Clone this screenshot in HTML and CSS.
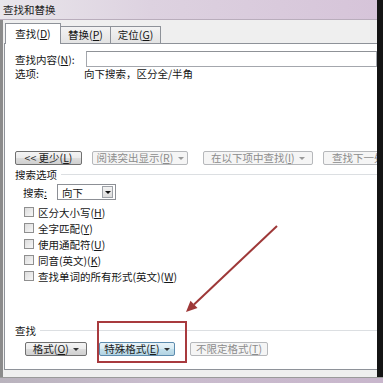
FILE: index.html
```html
<!DOCTYPE html>
<html lang="zh-CN">
  <head>
    <meta charset="utf-8">
    <title>查找和替换</title>
    <link rel="stylesheet" href="styles.css">
  </head>

  <body>
    <div class="window">
      <div class="main">
        <div class="dialog">
          <div class="titlebar">查找和替换</div>
          <div class="frame">
            <div class="tabs">
              <div class="tab tab-active">查找(<u>D</u>)</div>
              <div class="tab">替换(<u>P</u>)</div>
              <div class="tab">定位(<u>G</u>)</div>
            </div>

            <div class="panel">
              <div class="find-row">
                <span class="find-label">查找内容(<u>N</u>):</span>
                <div class="text-input"></div>
              </div>
              <div class="options-row">
                <span class="options-label">选项:</span>
                <span>向下搜索，区分全/半角</span>
              </div>

              <!-- main action buttons -->
              <div class="btn-row">
                <div class="btn btn-less">&lt;&lt; 更少(<u>L</u>)</div>
                <div class="btn btn-off btn-read">阅读突出显示(<u>R</u>) <span class="caret"></span></div>
                <div class="btn btn-off btn-in">在以下项中查找(<u>I</u>) <span class="caret"></span></div>
                <div class="btn btn-off btn-next">查找下一处</div>
              </div>

              <div class="group-title">搜索选项</div>
              <div class="search-row">
                <span class="search-label">搜索<u>:</u></span>
                <div class="dropdown">
                  <span class="dropdown-value">向下</span>
                  <span class="dropdown-btn"><span class="caret caret-dark"></span></span>
                </div>
              </div>

              <div class="checks">
                <div class="check"><span class="box"></span>区分大小写(<u>H</u>)</div>
                <div class="check"><span class="box"></span>全字匹配(<u>Y</u>)</div>
                <div class="check"><span class="box"></span>使用通配符(<u>U</u>)</div>
                <div class="check"><span class="box"></span>同音(英文)(<u>K</u>)</div>
                <div class="check"><span class="box"></span>查找单词的所有形式(英文)(<u>W</u>)</div>
              </div>

              <div class="group-title group-find">查找</div>
              <div class="btn-row btn-row-bottom">
                <div class="btn btn-format">格式(<u>O</u>) <span class="caret"></span></div>
                <div class="btn btn-hot btn-special">特殊格式(<u>E</u>) <span class="caret"></span></div>
                <div class="btn btn-off btn-noformat">不限定格式(<u>T</u>)</div>
              </div>
            </div>
          </div>
        </div>
        <div class="edge"></div>
      </div>
      <div class="bottom-strip"></div>

      <!-- annotation drawn over the screenshot -->
      <div class="mark-box"></div>
      <svg class="mark-arrow" width="383" height="383" viewBox="0 0 383 383">
        <line x1="277" y1="226" x2="194" y2="304.5" stroke="#9e3838" stroke-width="2" />
        <polygon points="186,312 197.5,308 190.5,300.8" fill="#9e3838" />
      </svg>
    </div>
  </body>
</html>
```

FILE: styles.css
```css
* {
  box-sizing: border-box;
}
body {
  margin: 0;
  background: #fff;
  font-family: "Noto Sans CJK SC", "Liberation Sans", sans-serif;
  font-size: 10.5px;
  color: #151515;
}
u {
  text-decoration: underline;
}
.window {
  position: relative;
  width: 383px;
  height: 383px;
  overflow: hidden;
  display: flex;
  flex-direction: column;
}
.main {
  display: flex;
  height: 377px;
}
.dialog {
  flex: 1;
  display: flex;
  flex-direction: column;
  min-width: 0;
}
.edge {
  width: 6px;
  background: #141414;
}
.titlebar {
  height: 20px;
  line-height: 19px;
  padding-left: 3px;
  color: #1e1e1e;
  background: linear-gradient(to right, #e9e6eb 0%, #ddd2e0 40%, #d6c4d9 100%);
  border-bottom: 1px solid #b9adbc;
}
.frame {
  flex: 1;
  display: flex;
  flex-direction: column;
  background: #efefef;
  border-left: 3px solid #8b8b8b;
  padding: 3px 0 7px 1px;
}
.tabs {
  display: flex;
  align-items: flex-end;
  height: 20px;
  padding-left: 1px;
  position: relative;
  z-index: 1;
}
.tab {
  height: 17px;
  line-height: 15px;
  width: 51px;
  white-space: nowrap;
  text-align: center;
  border: 1px solid #8e9299;
  border-bottom: none;
  background: linear-gradient(#f3f3f3, #e3e3e3);
  margin-left: -1px;
}
.tab-active {
  height: 21px;
  line-height: 20px;
  width: 56px;
  margin-left: 0;
  margin-bottom: -1px;
  background: #fff;
}
.panel {
  flex: 1;
  background: #fff;
  border: 1px solid #8e9299;
  border-right: none;
  padding-left: 10px;
}
.find-row {
  display: flex;
  align-items: center;
  margin-top: 7px;
  height: 16px;
}
.find-label {
  width: 71px;
}
.text-input {
  flex: 1;
  height: 16px;
  border: 1px solid #a4a7ad;
  border-top-color: #8f9297;
  background: #fff;
}
.options-row {
  display: flex;
  height: 13px;
  line-height: 13px;
}
.options-label {
  width: 69px;
}
.btn-row {
  display: flex;
  margin-top: 71px;
  height: 14px;
  white-space: nowrap;
}
.btn {
  height: 14px;
  line-height: 12px;
  text-align: center;
  border: 1px solid #707070;
  border-radius: 2px;
  background: linear-gradient(#f4f4f4 0%, #ebebeb 50%, #dcdcdc 51%, #d0d0d0 100%);
  color: #1c1c1c;
  flex-shrink: 0;
}
.btn-off {
  border-color: #b6b8bb;
  background: #f5f5f5;
  color: #8c8c8c;
}
.btn-hot {
  border-color: #5d8cae;
  background: linear-gradient(#e9f4f9 0%, #d7ebf3 50%, #c3e0ec 51%, #b3d3e2 100%);
}
.btn-less {
  width: 67px;
}
.btn-read {
  width: 96px;
  margin-left: 10px;
}
.btn-in {
  width: 110px;
  margin-left: 15px;
}
.btn-next {
  width: 70px;
  margin-left: 10px;
  text-align: left;
  padding-left: 8px;
}
.caret {
  display: inline-block;
  vertical-align: middle;
  margin-left: 2px;
  margin-top: -2px;
  border-left: 3px solid transparent;
  border-right: 3px solid transparent;
  border-top: 3px solid #6a6a6a;
}
.btn-off .caret {
  border-top-color: #9a9a9a;
}
.btn-format .caret,
.btn-hot .caret {
  border-top-color: #333;
}
.group-title {
  display: flex;
  align-items: center;
  margin-top: 3px;
  height: 13px;
  line-height: 13px;
}
.group-title::after {
  content: "";
  flex: 1;
  margin-left: 4px;
  border-top: 1px solid #dcdfe2;
}
.group-find {
  margin-top: 40px;
}
.search-row {
  display: flex;
  align-items: center;
  margin-top: 3px;
  height: 16px;
  padding-left: 8px;
}
.search-label {
  width: 34px;
}
.dropdown {
  display: flex;
  align-items: center;
  width: 59px;
  height: 16px;
  border: 1px solid #8c8f95;
  background: #fff;
  padding: 0 2px 0 4px;
}
.dropdown-value {
  flex: 1;
}
.dropdown-btn {
  display: flex;
  align-items: center;
  justify-content: center;
  width: 11px;
  height: 12px;
  border: 1px solid #9ea2a8;
  background: linear-gradient(#f3f3f3, #dcdcdc);
}
.caret-dark {
  margin: 0;
  border-top-color: #111;
}
.checks {
  margin-top: 4px;
  padding-left: 9px;
}
.check {
  display: flex;
  align-items: center;
  height: 16px;
}
.box {
  width: 10px;
  height: 10px;
  margin-right: 4px;
  border: 1px solid #8f8f8f;
  background: linear-gradient(135deg, #dcdcdc, #f7f7f7);
}
.btn-row-bottom {
  margin-top: 5px;
  padding-left: 10px;
}
.btn-format {
  width: 62px;
}
.btn-special {
  width: 76px;
  margin-left: 12px;
}
.btn-noformat {
  width: 78px;
  margin-left: 15px;
}
.bottom-strip {
  height: 6px;
  border-top: 1px solid #9a9a9a;
  background: linear-gradient(to right, #b9b3bd, #c9bccd 40%, #c8b6cc 100%);
}
.mark-box {
  position: absolute;
  left: 97px;
  top: 321px;
  width: 90px;
  height: 42px;
  border: 2px solid #a83a3e;
}
.mark-arrow {
  position: absolute;
  left: 0;
  top: 0;
  pointer-events: none;
}
```
